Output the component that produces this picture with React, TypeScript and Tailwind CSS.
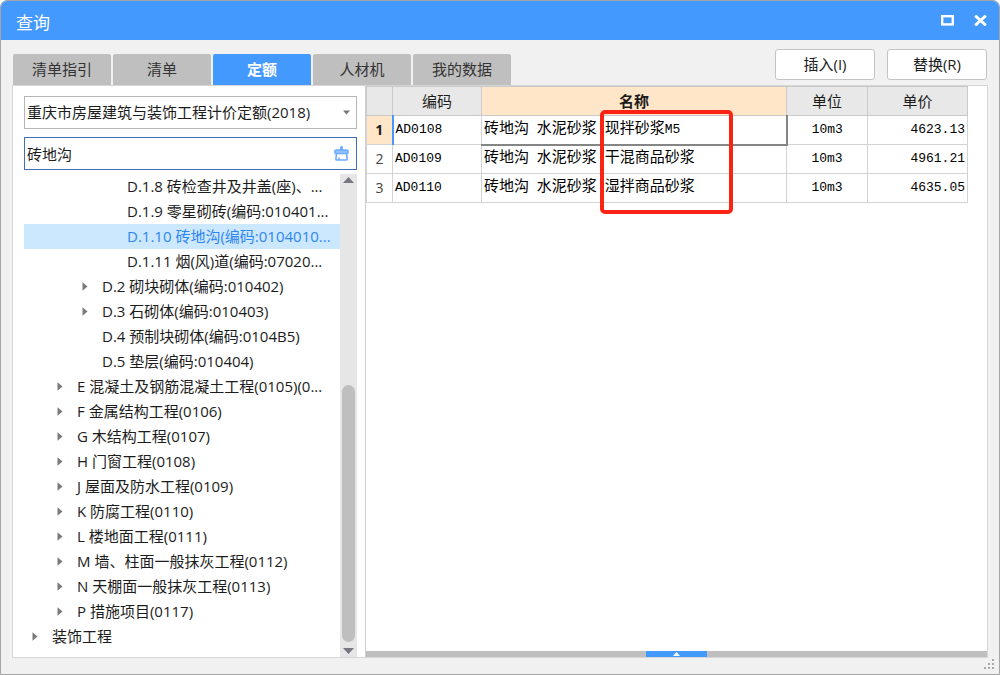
import { useState } from "react";

type TreeNode = { label: string; level: 1 | 2 | 3 | 4; branch?: boolean };

const tabs = ["清单指引", "清单", "定额", "人材机", "我的数据"];

const nodes: TreeNode[] = [
  { label: "D.1.8 砖检查井及井盖(座)、...", level: 4 },
  { label: "D.1.9 零星砌砖(编码:010401...", level: 4 },
  { label: "D.1.10 砖地沟(编码:0104010...", level: 4 },
  { label: "D.1.11 烟(风)道(编码:07020...", level: 4 },
  { label: "D.2 砌块砌体(编码:010402)", level: 3, branch: true },
  { label: "D.3 石砌体(编码:010403)", level: 3, branch: true },
  { label: "D.4 预制块砌体(编码:0104B5)", level: 3 },
  { label: "D.5 垫层(编码:010404)", level: 3 },
  { label: "E 混凝土及钢筋混凝土工程(0105)(0...", level: 2, branch: true },
  { label: "F 金属结构工程(0106)", level: 2, branch: true },
  { label: "G 木结构工程(0107)", level: 2, branch: true },
  { label: "H 门窗工程(0108)", level: 2, branch: true },
  { label: "J 屋面及防水工程(0109)", level: 2, branch: true },
  { label: "K 防腐工程(0110)", level: 2, branch: true },
  { label: "L 楼地面工程(0111)", level: 2, branch: true },
  { label: "M 墙、柱面一般抹灰工程(0112)", level: 2, branch: true },
  { label: "N 天棚面一般抹灰工程(0113)", level: 2, branch: true },
  { label: "P 措施项目(0117)", level: 2, branch: true },
  { label: "装饰工程", level: 1, branch: true },
];

const indent = { 1: "pl-2", 2: "pl-[33px]", 3: "pl-[58px]", 4: "pl-[83px]" };

const rows = [
  { code: "AD0108", name: "砖地沟 水泥砂浆 现拌砂浆M5", unit: "10m3", price: "4623.13" },
  { code: "AD0109", name: "砖地沟 水泥砂浆 干混商品砂浆", unit: "10m3", price: "4961.21" },
  { code: "AD0110", name: "砖地沟 水泥砂浆 湿拌商品砂浆", unit: "10m3", price: "4635.05" },
];

const mono = "font-['Liberation_Mono','Noto_Sans_CJK_SC',monospace] text-[13px] text-black";

/* Latin runs and spaces are half the width of a Chinese character. */
function MixedText({ text }: { text: string }) {
  return (
    <>
      {text.split(/([ -~]+)/).map((run, i) => (
        <span key={i} className={i % 2 ? "text-[13px]" : "text-[15px]"}>
          {run}
        </span>
      ))}
    </>
  );
}

function TitleBar() {
  return (
    <header className="flex h-[39px] items-center justify-between bg-[#4499ff] pt-1 pr-3 pl-[15px] text-white">
      <h1 className="text-[17px]">查询</h1>
      <div className="flex items-center gap-5 pb-1">
        <button type="button" aria-label="最大化">
          <svg width="13" height="11" viewBox="0 0 13 11" fill="none" stroke="currentColor" strokeWidth="2.4">
            <rect x="1.2" y="1.2" width="10.6" height="8.2" />
          </svg>
        </button>
        <button type="button" aria-label="关闭">
          <svg width="13" height="11" viewBox="0 0 13 11" fill="none" stroke="currentColor" strokeWidth="2.8">
            <path d="M1.2 0.6 11.8 10.4M11.8 0.6 1.2 10.4" />
          </svg>
        </button>
      </div>
    </header>
  );
}

function SearchPanel() {
  const [query, setQuery] = useState("砖地沟");
  const [active, setActive] = useState(2);
  return (
    <aside className="flex w-[353px] shrink-0 flex-col border-r border-[#cfcfcf] pt-[10px] pr-2 pl-[11px]">
      <div className="relative">
        <select
          aria-label="定额库"
          className="h-[33px] w-full appearance-none border border-[#b5b5b5] bg-white pb-[2px] pl-[2px] text-[15px] outline-none"
        >
          <option>重庆市房屋建筑与装饰工程计价定额(2018)</option>
        </select>
        <svg className="pointer-events-none absolute top-[14px] right-[7px]" width="7" height="5" viewBox="0 0 7 5">
          <path d="M0 0.5H7L3.5 4.5Z" fill="#777" />
        </svg>
      </div>
      <div className="mt-2 flex h-[33px] items-center border border-[#3f6fb5] pr-[7px] pl-[2px]">
        <input
          aria-label="搜索"
          value={query}
          onChange={(e) => setQuery(e.target.value)}
          className="min-w-0 flex-1 bg-transparent text-[15px] outline-none"
        />
        <button type="button" aria-label="清除">
          <svg width="15" height="15" viewBox="0 0 15 15" fill="none" stroke="#6aabff">
            <path d="M7.5 1.4V4" strokeWidth="2.8" strokeLinecap="round" />
            <rect x="0.8" y="4" width="13.4" height="3.6" rx="1.4" fill="#8fc0ff" strokeWidth="1.4" />
            <path d="M2.4 8 1.9 13.2Q1.9 14 2.7 14H12.3Q13.1 14 13.1 13.2L12.6 8M5 14V11.6" strokeWidth="1.6" />
          </svg>
        </button>
      </div>
      <div className="mt-1 flex flex-1">
        <ul role="tree" aria-label="定额目录" className="min-w-0 flex-1">
          {nodes.map((node, i) => (
            <li key={node.label} role="treeitem" aria-level={node.level} aria-selected={i === active}>
              <button
                type="button"
                onClick={() => setActive(i)}
                className={`flex h-[25px] w-full items-center whitespace-nowrap pb-[2px] text-left ${indent[node.level]} ${
                  i === active ? "bg-[#cce8ff] text-[#2f86f0]" : ""
                }`}
              >
                <span className="flex w-5 shrink-0 pt-[2px]">
                  {node.branch && (
                    <svg width="6" height="9" viewBox="0 0 6 9">
                      <path d="M0.5 0.3V8.7L5.5 4.5Z" fill="#7a7a7a" />
                    </svg>
                  )}
                </span>
                <span className="text-[15px]">{node.label}</span>
              </button>
            </li>
          ))}
        </ul>
        <div className="flex w-[17px] flex-col items-center bg-[#e6e6e6] pt-[3px] pb-[3px]">
          <svg width="11" height="6" viewBox="0 0 11 6">
            <path d="M0 6H11L5.5 0Z" fill="#767680" />
          </svg>
          <div className="flex w-full flex-1 flex-col justify-end px-[2px] pb-[6px]">
            <div className="h-[56%] rounded-full bg-[#bfbfbf]" />
          </div>
          <svg width="11" height="6" viewBox="0 0 11 6">
            <path d="M0 0H11L5.5 6Z" fill="#767680" />
          </svg>
        </div>
      </div>
    </aside>
  );
}

function ResultTable() {
  const head = "h-[29px] border border-[#c9c9c9] bg-[#e8e8e8] p-0 text-[15px] font-normal";
  const cell = "h-[29px] border border-[#d3d3d3] p-0";
  return (
    <div className="relative pr-[19px]">
      <table className="w-full table-fixed border-collapse">
        <colgroup>
          <col className="w-[26px]" />
          <col className="w-[89px]" />
          <col />
          <col className="w-[81px]" />
          <col className="w-[100px]" />
        </colgroup>
        <thead>
          <tr>
            <th className={head} aria-label="序号" />
            <th className={head}>编码</th>
            <th className="h-[29px] border border-[#c9c9c9] bg-[#ffe6c8] p-0 text-[15px] font-bold">名称</th>
            <th className={head}>单位</th>
            <th className={head}>单价</th>
          </tr>
        </thead>
        <tbody>
          {rows.map((row, i) => (
            <tr key={row.code}>
              <th
                scope="row"
                className={`${cell} text-sm ${
                  i === 0 ? "border-r-2 border-r-[#4499ff] bg-[#ffe6c8] font-bold" : "font-normal text-[#444]"
                }`}
              >
                {i + 1}
              </th>
              <td className={`${cell} ${mono} pl-[2px]`}>{row.code}</td>
              <td
                className={`${cell} ${mono} whitespace-nowrap pl-[2px] ${
                  i === 0
                    ? "border-t-[#4499ff] border-r-2 border-r-[#858585] border-b-2 border-b-[#858585] border-l-[#858585]"
                    : ""
                }`}
              >
                <MixedText text={row.name} />
              </td>
              <td className={`${cell} ${mono} text-center`}>{row.unit}</td>
              <td className={`${cell} ${mono} pr-[2px] text-right`}>{row.price}</td>
            </tr>
          ))}
        </tbody>
      </table>
      <div className="pointer-events-none absolute top-6 left-[234px] h-[104px] w-[133px] rounded-[5px] border-4 border-[#fb2314]" />
    </div>
  );
}

export default function App() {
  const [tab, setTab] = useState(2);
  return (
    <div className="min-h-screen bg-white">
      <main className="relative flex min-h-screen flex-col overflow-hidden rounded-t-[7px] border border-[#a5a5a5] bg-[#f1f1f1] font-['Open_Sans','Noto_Sans_CJK_SC',sans-serif] text-[15px] leading-5 text-[#1c1c1c]">
        <TitleBar />
        <div className="flex items-end justify-between pr-3 pl-3">
          <div role="tablist" className="mt-[14px] flex gap-[2px]">
            {tabs.map((name, i) => (
              <button
                key={name}
                type="button"
                role="tab"
                aria-selected={tab === i}
                onClick={() => setTab(i)}
                className={`h-[31px] w-[98px] rounded-t-[2px] pb-[2px] text-[15px] ${
                  tab === i ? "bg-[#4499ff] font-bold text-white" : "bg-[#bfbfbf] text-[#333]"
                }`}
              >
                {name}
              </button>
            ))}
          </div>
          <div className="mb-[5px] flex gap-3">
            <button type="button" className="h-[31px] w-[100px] rounded-[3px] border border-[#c4c4c4] bg-white pb-[2px]">
              插入(I)
            </button>
            <button type="button" className="h-[31px] w-[100px] rounded-[3px] border border-[#c4c4c4] bg-white pb-[2px]">
              替换(R)
            </button>
          </div>
        </div>
        <div className="mr-[11px] mb-4 ml-[11px] flex flex-1 border border-[#d6d6d6] bg-white">
          <SearchPanel />
          <section className="flex min-w-0 flex-1 flex-col justify-between">
            <ResultTable />
            <div className="flex h-[6px] justify-center bg-[#bfbfbf]">
              <button type="button" aria-label="展开" className="flex w-[61px] items-center justify-center bg-[#4499ff]">
                <svg width="7" height="4" viewBox="0 0 7 4">
                  <path d="M0 4H7L3.5 0Z" fill="#fff" />
                </svg>
              </button>
            </div>
          </section>
        </div>
        <svg className="absolute right-1 bottom-1" width="11" height="11" viewBox="0 0 11 11" fill="#a9a9a9">
          <path d="M8 0h2v2h-2zM4 4h2v2h-2zM8 4h2v2h-2zM0 8h2v2h-2zM4 8h2v2h-2zM8 8h2v2h-2z" />
        </svg>
      </main>
    </div>
  );
}
